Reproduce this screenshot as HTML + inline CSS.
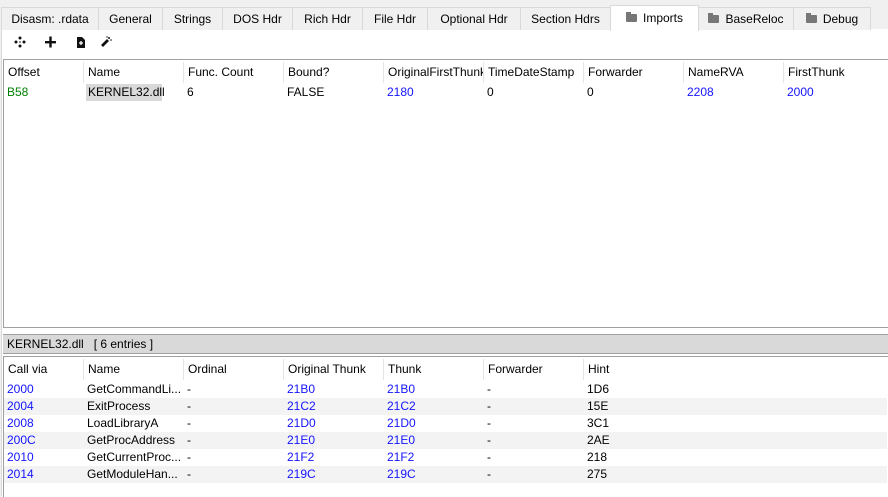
<!DOCTYPE html>
<html><head><style>
*{margin:0;padding:0;box-sizing:border-box}
body{width:888px;height:496px;background:#f0f0f0;font-family:"Liberation Sans",sans-serif;font-size:12px;color:#000;position:relative;overflow:hidden}
.tab{position:absolute;top:7px;height:23px;border:1px solid #d9d9d9;border-bottom:none;background:#f0f0f0;text-align:center;line-height:22px;font-size:12px}
.tab.act{top:5px;height:26px;background:#fff;line-height:24px;z-index:2}
.fold{display:inline-block;width:11px;height:8px;background:#777;border-radius:1px;margin-right:6px;vertical-align:-0px;position:relative}
.fold:before{content:"";position:absolute;left:0;top:-2px;width:5px;height:3px;background:#777}
.panel{position:absolute;left:1px;top:29px;width:887px;height:467px;background:#fff;border-left:1px solid #d9d9d9}
.tb{position:absolute;left:3px;top:30px;width:885px;height:24px;background:#fff}
.t{position:absolute;background:#fff;border:1px solid #a0a0a0}
.c{position:absolute;white-space:nowrap;height:17px;line-height:17px}
.h{position:absolute;height:21px;line-height:21px;white-space:nowrap;border-right:1px solid #e5e5e5;overflow:hidden}
.b{color:#1414ff}
</style></head><body>
<div class="panel"></div>
<div class="tab" style="left:1px;width:98px">Disasm: .rdata</div>
<div class="tab" style="left:98px;width:65px">General</div>
<div class="tab" style="left:162px;width:61px">Strings</div>
<div class="tab" style="left:222px;width:71px">DOS Hdr</div>
<div class="tab" style="left:292px;width:71px">Rich Hdr</div>
<div class="tab" style="left:362px;width:66px">File Hdr</div>
<div class="tab" style="left:427px;width:94px">Optional Hdr</div>
<div class="tab" style="left:520px;width:91px">Section Hdrs</div>
<div class="tab act" style="left:610px;width:89px"><span class="fold"></span>Imports</div>
<div class="tab" style="left:698px;width:96px"><span class="fold"></span>BaseReloc</div>
<div class="tab" style="left:793px;width:78px"><span class="fold"></span>Debug</div>
<div class="tb">
<svg width="120" height="24" style="position:absolute;left:0;top:0">
<g fill="#111"><circle cx="17" cy="8" r="1.5"/><circle cx="17" cy="16" r="1.5"/><circle cx="13" cy="12" r="1.5"/><circle cx="21" cy="12" r="1.5"/><circle cx="17" cy="12" r="0.8"/>
<rect x="42" y="11" width="11" height="2.4"/><rect x="46.3" y="6.5" width="2.4" height="11"/>
<path d="M74 7h5l3 3v8h-8z"/><path d="M104 9l2 2-6 6-2-2z"/><circle cx="106" cy="8" r="1"/><circle cx="108" cy="10" r="0.8"/><circle cx="104" cy="7" r="0.7"/></g>
<path d="M76 13h4M78 11v4" stroke="#fff" stroke-width="1.3"/>
</svg></div>
<div class="t" style="left:3px;top:59px;width:886px;height:269px">
<div class="h" style="left:0;top:2px;width:80px;padding-left:4px">Offset</div>
<div class="h" style="left:80px;top:2px;width:100px;padding-left:4px">Name</div>
<div class="h" style="left:180px;top:2px;width:100px;padding-left:4px">Func. Count</div>
<div class="h" style="left:280px;top:2px;width:100px;padding-left:4px">Bound?</div>
<div class="h" style="left:380px;top:2px;width:100px;padding-left:4px">OriginalFirstThunk</div>
<div class="h" style="left:480px;top:2px;width:100px;padding-left:4px">TimeDateStamp</div>
<div class="h" style="left:580px;top:2px;width:100px;padding-left:4px">Forwarder</div>
<div class="h" style="left:680px;top:2px;width:100px;padding-left:4px">NameRVA</div>
<div class="h" style="left:780px;top:2px;width:100px;padding-left:4px;border:none">FirstThunk</div>
<div class="c" style="left:3px;top:24px;color:#008000">B58</div>
<div class="c" style="left:82px;top:24px;width:76px;background:#d9d9d9;padding-left:2px">KERNEL32.dll</div>
<div class="c" style="left:183px;top:24px">6</div>
<div class="c" style="left:283px;top:24px">FALSE</div>
<div class="c b" style="left:383px;top:24px">2180</div>
<div class="c" style="left:483px;top:24px">0</div>
<div class="c" style="left:583px;top:24px">0</div>
<div class="c b" style="left:683px;top:24px">2208</div>
<div class="c b" style="left:783px;top:24px">2000</div>
</div>
<div style="position:absolute;left:3px;top:334px;width:885px;height:20px;background:#d9d9d9;border-top:1px solid #a0a0a0;border-bottom:1px solid #a0a0a0;line-height:19px;padding-left:4px;white-space:pre">KERNEL32.dll   [ 6 entries ]</div>
<div class="t" style="left:3px;top:356px;width:886px;height:141px;border-bottom:none">
<div class="h" style="left:0;top:2px;width:80px;padding-left:4px">Call via</div>
<div class="h" style="left:80px;top:2px;width:100px;padding-left:4px">Name</div>
<div class="h" style="left:180px;top:2px;width:100px;padding-left:4px">Ordinal</div>
<div class="h" style="left:280px;top:2px;width:100px;padding-left:4px">Original Thunk</div>
<div class="h" style="left:380px;top:2px;width:100px;padding-left:4px">Thunk</div>
<div class="h" style="left:480px;top:2px;width:100px;padding-left:4px">Forwarder</div>
<div class="h" style="left:580px;top:2px;width:100px;padding-left:4px;border:none">Hint</div>
<div style="position:absolute;left:0;top:41px;width:883px;height:17px;background:#f3f3f3"></div>
<div style="position:absolute;left:0;top:75px;width:883px;height:17px;background:#f3f3f3"></div>
<div style="position:absolute;left:0;top:109px;width:883px;height:17px;background:#f3f3f3"></div>
<div class="c b" style="left:3px;top:24px">2000</div><div class="c" style="left:83px;top:24px">GetCommandLi...</div><div class="c" style="left:183px;top:24px">-</div><div class="c b" style="left:283px;top:24px">21B0</div><div class="c b" style="left:383px;top:24px">21B0</div><div class="c" style="left:483px;top:24px">-</div><div class="c" style="left:583px;top:24px">1D6</div>
<div class="c b" style="left:3px;top:41px">2004</div><div class="c" style="left:83px;top:41px">ExitProcess</div><div class="c" style="left:183px;top:41px">-</div><div class="c b" style="left:283px;top:41px">21C2</div><div class="c b" style="left:383px;top:41px">21C2</div><div class="c" style="left:483px;top:41px">-</div><div class="c" style="left:583px;top:41px">15E</div>
<div class="c b" style="left:3px;top:58px">2008</div><div class="c" style="left:83px;top:58px">LoadLibraryA</div><div class="c" style="left:183px;top:58px">-</div><div class="c b" style="left:283px;top:58px">21D0</div><div class="c b" style="left:383px;top:58px">21D0</div><div class="c" style="left:483px;top:58px">-</div><div class="c" style="left:583px;top:58px">3C1</div>
<div class="c b" style="left:3px;top:75px">200C</div><div class="c" style="left:83px;top:75px">GetProcAddress</div><div class="c" style="left:183px;top:75px">-</div><div class="c b" style="left:283px;top:75px">21E0</div><div class="c b" style="left:383px;top:75px">21E0</div><div class="c" style="left:483px;top:75px">-</div><div class="c" style="left:583px;top:75px">2AE</div>
<div class="c b" style="left:3px;top:92px">2010</div><div class="c" style="left:83px;top:92px">GetCurrentProc...</div><div class="c" style="left:183px;top:92px">-</div><div class="c b" style="left:283px;top:92px">21F2</div><div class="c b" style="left:383px;top:92px">21F2</div><div class="c" style="left:483px;top:92px">-</div><div class="c" style="left:583px;top:92px">218</div>
<div class="c b" style="left:3px;top:109px">2014</div><div class="c" style="left:83px;top:109px">GetModuleHan...</div><div class="c" style="left:183px;top:109px">-</div><div class="c b" style="left:283px;top:109px">219C</div><div class="c b" style="left:383px;top:109px">219C</div><div class="c" style="left:483px;top:109px">-</div><div class="c" style="left:583px;top:109px">275</div>
</div>
</body></html>
